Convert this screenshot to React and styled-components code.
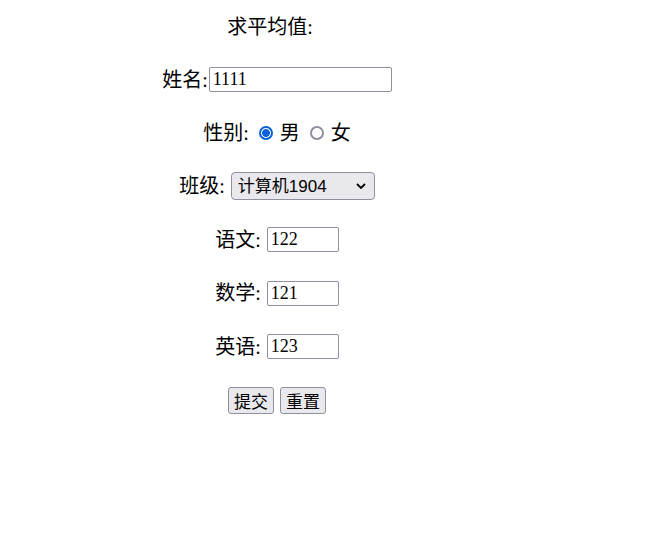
import React, { useState } from "react";
import styled, { createGlobalStyle } from "styled-components";

const Global = createGlobalStyle`
    body {
        margin: 0;
        background: #fff;
        color: #000;
        font-family: "Liberation Serif", "Noto Sans CJK SC", serif;
    }
`;

const Form = styled.form`
    width: 554px;
    padding-top: 1px;
    display: flex;
    flex-direction: column;
    align-items: center;
    font-size: 20px;
`;

const Row = styled.div`
    height: ${({ h }) => h || 53.4}px;
    display: flex;
    align-items: center;
    justify-content: center;
    gap: ${({ gap }) => (gap === undefined ? 6 : gap)}px;
    padding-right: ${({ shift }) => shift || 0}px;
    white-space: nowrap;
`;

const Label = styled.span`
    line-height: 1;
`;

const TextInput = styled.input`
    box-sizing: border-box;
    width: ${({ w }) => w}px;
    height: 25px;
    margin: 0;
    padding: 1px 3px;
    border: 1px solid #8f8f9d;
    border-radius: 2px;
    font-family: "Liberation Serif", serif;
    font-size: 18px;
    color: #000;
    background: #fff;
    outline: none;
`;

const Choice = styled.label`
    display: flex;
    align-items: center;
    gap: 7px;
    line-height: 1;
`;

const Radio = styled.input`
    appearance: none;
    box-sizing: border-box;
    width: 14px;
    height: 14px;
    margin: 0;
    border: 2px solid #8f8f9d;
    border-radius: 50%;
    background: #fff;

    &:checked {
        border-color: #0b62d6;
        background: radial-gradient(circle, #0b62d6 0 3.6px, #fff 4.2px);
    }
`;

const SelectWrap = styled.span`
    position: relative;
    display: inline-flex;
`;

const Select = styled.select`
    appearance: none;
    box-sizing: border-box;
    width: 144px;
    height: 28px;
    margin: 0;
    padding: 0 24px 0 6px;
    border: 1px solid #8f8f9d;
    border-radius: 4px;
    background: #e9e9ed;
    font-family: "Liberation Sans", "Noto Sans CJK SC", sans-serif;
    font-size: 17px;
    color: #000;
    outline: none;
`;

const Chevron = styled.svg`
    position: absolute;
    right: 9px;
    top: 11px;
    width: 10px;
    height: 6px;
    pointer-events: none;
`;

const Button = styled.button`
    box-sizing: border-box;
    height: 27px;
    margin: 0;
    padding: 0 5px;
    border: 1px solid #8f8f9d;
    border-radius: 3px;
    background: #e9e9ed;
    font-family: "Noto Sans CJK SC", sans-serif;
    font-size: 17px;
    line-height: 1;
    color: #000;
`;

export default function App() {
    const [sex, setSex] = useState("m");
    return (
        <>
            <Global />
            <Form onSubmit={(e) => e.preventDefault()}>
                <Row h={52} shift={14}>
                    <Label>求平均值:</Label>
                </Row>
                <Row gap={1}>
                    <Label>姓名:</Label>
                    <TextInput w={183} defaultValue="1111" />
                </Row>
                <Row gap={10}>
                    <Label>性别:</Label>
                    <Choice>
                        <Radio type="radio" name="sex" checked={sex === "m"} onChange={() => setSex("m")} />
                        男
                    </Choice>
                    <Choice>
                        <Radio type="radio" name="sex" checked={sex === "f"} onChange={() => setSex("f")} />
                        女
                    </Choice>
                </Row>
                <Row>
                    <Label>班级:</Label>
                    <SelectWrap>
                        <Select defaultValue="1904">
                            <option value="1904">计算机1904</option>
                            <option value="1903">计算机1903</option>
                        </Select>
                        <Chevron viewBox="0 0 10 6">
                            <path d="M1 1l4 4 4-4" fill="none" stroke="#000" strokeWidth="1.8" />
                        </Chevron>
                    </SelectWrap>
                </Row>
                <Row>
                    <Label>语文:</Label>
                    <TextInput w={72} defaultValue="122" />
                </Row>
                <Row>
                    <Label>数学:</Label>
                    <TextInput w={72} defaultValue="121" />
                </Row>
                <Row>
                    <Label>英语:</Label>
                    <TextInput w={72} defaultValue="123" />
                </Row>
                <Row>
                    <Button type="submit">提交</Button>
                    <Button type="reset">重置</Button>
                </Row>
            </Form>
        </>
    );
}
